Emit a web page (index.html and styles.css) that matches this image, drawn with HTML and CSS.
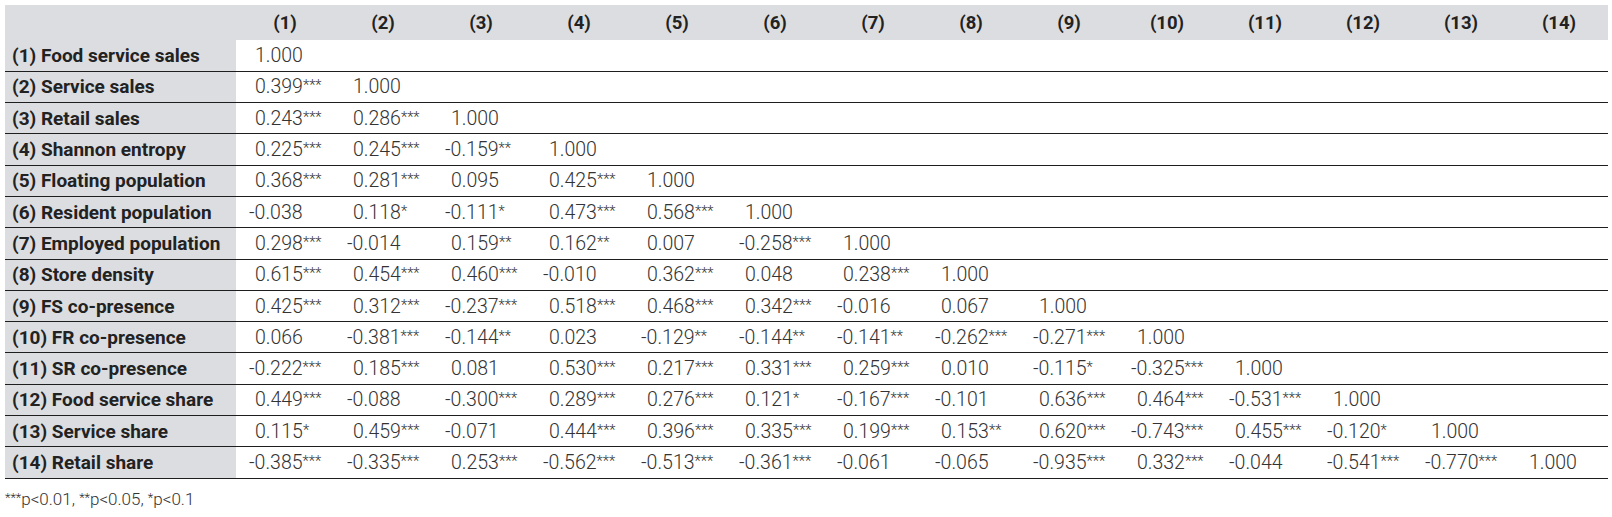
FILE: index.html
```html
<!DOCTYPE html>
<html lang="en">
<head>
<meta charset="utf-8">
<title>Correlation matrix</title>
<link rel="stylesheet" href="styles.css">
</head>
<body>
<div class="page">
<table class="corr">
<colgroup><col class="c-label"><col span="14" class="c-val"></colgroup>
<thead>
<tr><th class="corner"></th><th>(1)</th><th>(2)</th><th>(3)</th><th>(4)</th><th>(5)</th><th>(6)</th><th>(7)</th><th>(8)</th><th>(9)</th><th>(10)</th><th>(11)</th><th>(12)</th><th>(13)</th><th>(14)</th></tr>
</thead>
<tbody>
<tr><th>(1) Food service sales</th><td>1.000</td><td></td><td></td><td></td><td></td><td></td><td></td><td></td><td></td><td></td><td></td><td></td><td></td><td></td></tr>
<tr><th>(2) Service sales</th><td>0.399<sup>***</sup></td><td>1.000</td><td></td><td></td><td></td><td></td><td></td><td></td><td></td><td></td><td></td><td></td><td></td><td></td></tr>
<tr><th>(3) Retail sales</th><td>0.243<sup>***</sup></td><td>0.286<sup>***</sup></td><td>1.000</td><td></td><td></td><td></td><td></td><td></td><td></td><td></td><td></td><td></td><td></td><td></td></tr>
<tr><th>(4) Shannon entropy</th><td>0.225<sup>***</sup></td><td>0.245<sup>***</sup></td><td class="n">-0.159<sup>**</sup></td><td>1.000</td><td></td><td></td><td></td><td></td><td></td><td></td><td></td><td></td><td></td><td></td></tr>
<tr><th>(5) Floating population</th><td>0.368<sup>***</sup></td><td>0.281<sup>***</sup></td><td>0.095</td><td>0.425<sup>***</sup></td><td>1.000</td><td></td><td></td><td></td><td></td><td></td><td></td><td></td><td></td><td></td></tr>
<tr><th>(6) Resident population</th><td class="n">-0.038</td><td>0.118<sup>*</sup></td><td class="n">-0.111<sup>*</sup></td><td>0.473<sup>***</sup></td><td>0.568<sup>***</sup></td><td>1.000</td><td></td><td></td><td></td><td></td><td></td><td></td><td></td><td></td></tr>
<tr><th>(7) Employed population</th><td>0.298<sup>***</sup></td><td class="n">-0.014</td><td>0.159<sup>**</sup></td><td>0.162<sup>**</sup></td><td>0.007</td><td class="n">-0.258<sup>***</sup></td><td>1.000</td><td></td><td></td><td></td><td></td><td></td><td></td><td></td></tr>
<tr><th>(8) Store density</th><td>0.615<sup>***</sup></td><td>0.454<sup>***</sup></td><td>0.460<sup>***</sup></td><td class="n">-0.010</td><td>0.362<sup>***</sup></td><td>0.048</td><td>0.238<sup>***</sup></td><td>1.000</td><td></td><td></td><td></td><td></td><td></td><td></td></tr>
<tr><th>(9) FS co-presence</th><td>0.425<sup>***</sup></td><td>0.312<sup>***</sup></td><td class="n">-0.237<sup>***</sup></td><td>0.518<sup>***</sup></td><td>0.468<sup>***</sup></td><td>0.342<sup>***</sup></td><td class="n">-0.016</td><td>0.067</td><td>1.000</td><td></td><td></td><td></td><td></td><td></td></tr>
<tr><th>(10) FR co-presence</th><td>0.066</td><td class="n">-0.381<sup>***</sup></td><td class="n">-0.144<sup>**</sup></td><td>0.023</td><td class="n">-0.129<sup>**</sup></td><td class="n">-0.144<sup>**</sup></td><td class="n">-0.141<sup>**</sup></td><td class="n">-0.262<sup>***</sup></td><td class="n">-0.271<sup>***</sup></td><td>1.000</td><td></td><td></td><td></td><td></td></tr>
<tr><th>(11) SR co-presence</th><td class="n">-0.222<sup>***</sup></td><td>0.185<sup>***</sup></td><td>0.081</td><td>0.530<sup>***</sup></td><td>0.217<sup>***</sup></td><td>0.331<sup>***</sup></td><td>0.259<sup>***</sup></td><td>0.010</td><td class="n">-0.115<sup>*</sup></td><td class="n">-0.325<sup>***</sup></td><td>1.000</td><td></td><td></td><td></td></tr>
<tr><th>(12) Food service share</th><td>0.449<sup>***</sup></td><td class="n">-0.088</td><td class="n">-0.300<sup>***</sup></td><td>0.289<sup>***</sup></td><td>0.276<sup>***</sup></td><td>0.121<sup>*</sup></td><td class="n">-0.167<sup>***</sup></td><td class="n">-0.101</td><td>0.636<sup>***</sup></td><td>0.464<sup>***</sup></td><td class="n">-0.531<sup>***</sup></td><td>1.000</td><td></td><td></td></tr>
<tr><th>(13) Service share</th><td>0.115<sup>*</sup></td><td>0.459<sup>***</sup></td><td class="n">-0.071</td><td>0.444<sup>***</sup></td><td>0.396<sup>***</sup></td><td>0.335<sup>***</sup></td><td>0.199<sup>***</sup></td><td>0.153<sup>**</sup></td><td>0.620<sup>***</sup></td><td class="n">-0.743<sup>***</sup></td><td>0.455<sup>***</sup></td><td class="n">-0.120<sup>*</sup></td><td>1.000</td><td></td></tr>
<tr><th>(14) Retail share</th><td class="n">-0.385<sup>***</sup></td><td class="n">-0.335<sup>***</sup></td><td>0.253<sup>***</sup></td><td class="n">-0.562<sup>***</sup></td><td class="n">-0.513<sup>***</sup></td><td class="n">-0.361<sup>***</sup></td><td class="n">-0.061</td><td class="n">-0.065</td><td class="n">-0.935<sup>***</sup></td><td>0.332<sup>***</sup></td><td class="n">-0.044</td><td class="n">-0.541<sup>***</sup></td><td class="n">-0.770<sup>***</sup></td><td>1.000</td></tr>
</tbody>
</table>
<p class="note"><sup>***</sup>p&lt;0.01, <sup>**</sup>p&lt;0.05, <sup>*</sup>p&lt;0.1</p>
</div>
</body>
</html>
```
FILE: styles.css
```css
html, body {
  margin: 0;
  padding: 0;
  background: #ffffff;
}

.page {
  padding: 5px 5px 0 5px;
  font-family: Roboto, "Liberation Sans", sans-serif;
  color: #2a2a2a;
}

.corr {
  border-collapse: collapse;
  table-layout: fixed;
  width: 1602px;
}

.c-label { width: 231px; }
.c-val { width: 98px; }

.corr thead tr {
  height: 35px;
  background: #dcdde0;
}

.corr thead th {
  font-weight: 700;
  font-size: 18.5px;
  color: #222222;
  text-align: center;
  padding: 0;
}

.corr tbody tr {
  height: 31.3px;
}

.corr tbody th {
  background: #dcdde0;
  font-weight: 700;
  font-size: 19px;
  color: #222222;
  text-align: left;
  padding: 0 0 0 7px;
  white-space: nowrap;
  border-bottom: 1px solid #1e1e1e;
}

.corr tbody td {
  font-weight: 300;
  font-size: 19.5px;
  color: #333333;
  text-align: left;
  padding: 0 0 0 19px;
  white-space: nowrap;
  border-bottom: 1px solid #1e1e1e;
}

.corr tbody td.n {
  text-indent: -6px;
}

.corr sup,
.note sup {
  font-size: 0.75em;
  line-height: 0;
  vertical-align: 3px;
}

.note {
  margin: 10px 0 0 0;
  font-weight: 300;
  font-size: 17px;
  color: #333333;
}
```
